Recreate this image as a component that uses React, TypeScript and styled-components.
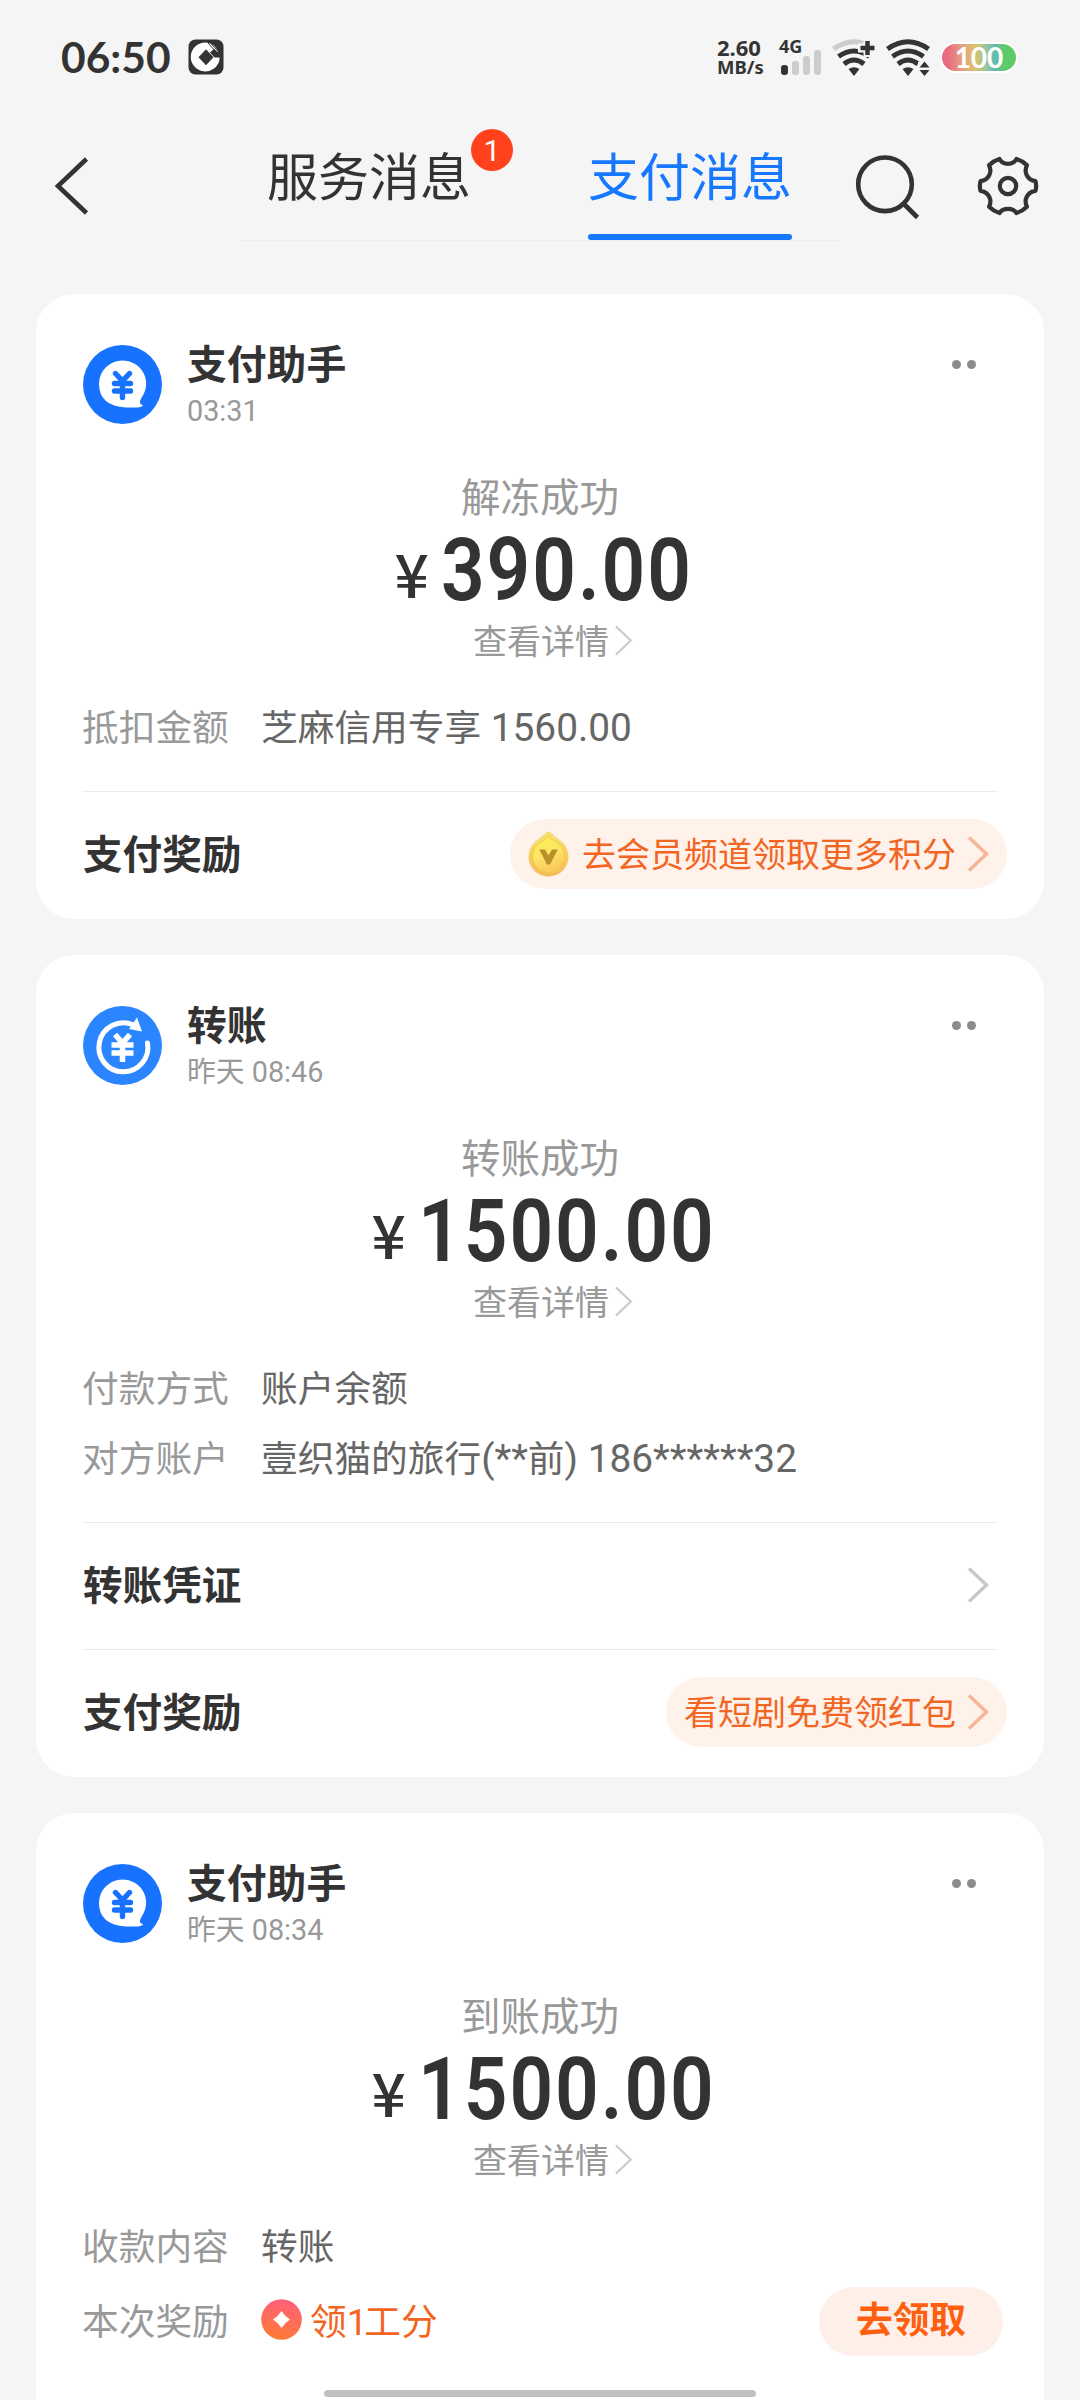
import React from 'react';
import styled, { createGlobalStyle } from 'styled-components';

const cjk = '"Noto Sans CJK SC", "Noto Sans", sans-serif';
const mixed = 'Roboto, "Noto Sans CJK SC", sans-serif';
const ink = '#333333';
const muted = '#999999';
const orange = '#f26522';

const GlobalStyle = createGlobalStyle`
  * { box-sizing: border-box; }
  body { margin: 0; background: #f5f5f5; }
  svg { display: block; flex: none; overflow: visible; }
`;

const Screen = styled.div`
  position: relative;
  width: 1080px;
  height: 2400px;
  overflow: hidden;
  background: #f5f5f5;
  color: ${ink};
  font-family: ${cjk};
`;

/* ---------- status bar ---------- */

const StatusBar = styled.div`
  display: flex;
  align-items: center;
  height: 114px;
  padding: 0 62px 0 61px;
`;

const Clock = styled.div`
  width: 127px;
  font: 700 42.5px/50px Lato, sans-serif;
`;

const StatusRight = styled.div`
  display: flex;
  align-items: center;
  gap: 10px;
  margin-left: auto;
`;

const NetSpeed = styled.div`
  width: 54px;
  font: 700 21px/20px "Noto Sans", sans-serif;
  white-space: nowrap;
`;

const SpeedValue = styled.div`
  font-size: 22px;
`;

const SpeedUnit = styled.div`
  font-size: 18.5px;
`;

const Cellular = styled.div`
  display: flex;
  flex-direction: column;
  width: 41px;
  height: 36px;
`;

const CellType = styled.div`
  height: 11px;
  margin-left: -2px;
  font: 700 18px/15px "Noto Sans", sans-serif;
`;

const Battery = styled.div`
  display: flex;
  align-items: center;
  justify-content: center;
  width: 78px;
  height: 31px;
  border: 2px solid #ffffff;
  border-radius: 16px;
  background: linear-gradient(90deg, #e96b80 8%, #e3a384 28%, #dcc26a 45%, #8fc6a3 62%, #63b9b5 70%, #5ecb6b 84%);
  color: #ffffff;
  font: 700 28px/27px Lato, sans-serif;
`;

/* ---------- navigation ---------- */

const NavBar = styled.div`
  display: flex;
  align-items: flex-start;
  height: 180px;
`;

const BackButton = styled.div`
  width: 240px;
  padding: 43px 0 0 53px;
`;

const Tabs = styled.div`
  display: flex;
  gap: 117px;
  width: 600px;
  height: 127px;
  padding-left: 27px;
  border-bottom: 1px solid #eeeeee;
`;

const Tab = styled.div<{ $active?: boolean }>`
  position: relative;
  width: 204px;
  height: 126px;
  padding-top: 30px;
  color: ${p => (p.$active ? '#1677ff' : ink)};
  font-size: 51px;
  line-height: 60px;
  white-space: nowrap;
  &::after {
    content: '';
    display: ${p => (p.$active ? 'block' : 'none')};
    height: 6px;
    margin-top: 30px;
    border-radius: 3px;
    background: #1677ff;
  }
`;

const Badge = styled.span`
  position: absolute;
  top: 15px;
  left: 204px;
  width: 42px;
  height: 42px;
  border-radius: 50%;
  background: #ff411c;
  color: #ffffff;
  font: 30px/43px Roboto, sans-serif;
  text-align: center;
`;

const NavActions = styled.div`
  display: flex;
  gap: 57px;
  padding: 42px 0 0 15px;
`;

/* ---------- cards ---------- */

const Feed = styled.div`
  display: flex;
  flex-direction: column;
  gap: 36px;
  padding: 0 36px;
`;

const Card = styled.section`
  padding: 45px 46px 1px;
  border-radius: 38px;
  background: #ffffff;
  &:last-child {
    padding-bottom: 100px;
  }
`;

const CardHead = styled.header`
  display: flex;
  align-items: flex-start;
  height: 128px;
`;

const AvatarSlot = styled.div`
  margin: 6px 25px 0 1px;
`;

const Title = styled.div`
  font-size: 39.8px;
  font-weight: 700;
  line-height: 46px;
`;

const Time = styled.div`
  margin-top: 7px;
  color: ${muted};
  font: 28.8px/38px ${mixed};
`;

const More = styled.div`
  display: flex;
  gap: 6px;
  margin: 21px 22px 0 auto;
`;

const Dot = styled.i`
  width: 9px;
  height: 9px;
  border-radius: 50%;
  background: #8c8c8c;
`;

const Status = styled.div`
  color: ${muted};
  font-size: 39.5px;
  line-height: 56px;
  text-align: center;
`;

const Amount = styled.div`
  display: flex;
  align-items: baseline;
  justify-content: center;
  height: 84px;
  margin: 5px 0 3px;
  padding-left: 11px;
  font: 600 87px/84px Roboto, sans-serif;
  letter-spacing: 2.2px;
  transform: scaleX(0.88);
`;

const Yen = styled.span`
  position: relative;
  top: -2px;
  margin-right: 16px;
  font: 500 60px/60px ${cjk};
  letter-spacing: 0;
  transform: scaleX(1.14);
`;

const DetailLink = styled.div`
  display: flex;
  align-items: center;
  justify-content: center;
  gap: 6px;
  height: 48px;
  margin-bottom: 27px;
  padding: 2px 0 0 26px;
  color: ${muted};
  font-size: 34px;
  line-height: 46px;
`;

const Row = styled.div<{ $tall?: boolean }>`
  display: flex;
  align-items: center;
  height: ${p => (p.$tall ? 80 : 70)}px;
  font-size: 36.7px;
  line-height: 50px;
  white-space: nowrap;
`;

const RowLabel = styled.div`
  width: 179px;
  color: ${muted};
`;

const RowValue = styled.div`
  padding-top: 7px;
  color: #666666;
  font-family: ${mixed};
`;

const Latin = styled.span`
  font-size: 38.8px;
  line-height: 40px;
`;

const RewardValue = styled.div`
  display: flex;
  align-items: center;
  gap: 8px;
  color: ${orange};
`;

const RewardText = styled.span`
  padding-top: 7px;
  font-family: ${mixed};
`;

const Points = styled.span`
  letter-spacing: -3px;
`;

const ClaimButton = styled.div`
  width: 184px;
  height: 69px;
  margin: 4px -5px 0 auto;
  border-radius: 35px;
  background: #ffefe9;
  color: #ff6010;
  font-weight: 700;
  line-height: 60px;
  text-align: center;
`;

const Footers = styled.div`
  margin-top: 31px;
`;

const Footer = styled.div`
  display: flex;
  align-items: center;
  justify-content: space-between;
  height: 127px;
  padding-bottom: 2px;
  border-top: 1px solid #ebebeb;
`;

const FooterLabel = styled.div`
  padding: 0 0 4px 1px;
  font-size: 39.6px;
  font-weight: 700;
  line-height: 50px;
`;

const FooterArrow = styled.div`
  margin-right: 9px;
`;

const Pill = styled.div`
  display: flex;
  align-items: center;
  height: 70px;
  margin-right: -9px;
  padding: 0 18px;
  border-radius: 35px;
  background: #fff2eb;
  color: ${orange};
  font-size: 34px;
  line-height: 50px;
  white-space: nowrap;
`;

const PillText = styled.span`
  margin-right: 12px;
  padding-bottom: 3px;
`;

const CoinSlot = styled.span`
  margin-right: 13px;
`;

const HomeIndicator = styled.div`
  position: absolute;
  left: 324px;
  bottom: 3px;
  width: 432px;
  height: 7px;
  border-radius: 4px;
  background: #c0c0c0;
`;

/* ---------- drawings ---------- */

const BankIcon = () => (
  <svg width="36" height="36" viewBox="0 0 36 36">
    <rect x="0.5" y="0.5" width="35" height="35" rx="7" fill="#333" />
    <path d="M18 3.5a14.5 14.5 0 1 0 13.6 16.8L31.5 18.6H26.5L22 13.5L26 10L30.5 13.5A14.5 14.5 0 0 0 18 3.5Z" fill="#fff" />
    <path d="M20 4L29 14M23 4.5L31 13" stroke="#333" strokeWidth="1" />
    <path d="M18 10.3l7.5 8l-7.5 8l-7.5-8z" fill="#333" />
  </svg>
);

const SignalBars = () => (
  <svg width="41" height="25" viewBox="0 0 41 25">
    <rect x="0" y="15" width="7" height="10" rx="3" fill="#333" />
    <rect x="11" y="11" width="7" height="14" rx="3" fill="#ccc" />
    <rect x="22" y="6" width="7" height="19" rx="3" fill="#ccc" />
    <rect x="33" y="0" width="7" height="25" rx="3" fill="#ccc" />
  </svg>
);

const WifiIcon = ({ plus }: { plus?: boolean }) => (
  <svg width="44" height="37" viewBox="0 0 44 37">
    <g fill="none" stroke="#333" strokeWidth="5">
      <path d="M1.5 10Q22-4.500 42.500 10" stroke={plus ? '#ccc' : '#333'} />
      <path d="M6.500 17.500Q22 6.500 37.500 17.500" />
      <path d="M12 25Q22 17 32 25" />
    </g>
    <path d="M16.500 30Q22 26.500 27.500 30L22 37Z" fill="#333" />
    {plus ? (
      <>
        <path d="M36 0V18M26 9H46" stroke="#f5f5f5" strokeWidth="9" />
        <path d="M35.500 2V16M28.500 9H42.500" stroke="#333" strokeWidth="4.500" />
      </>
    ) : (
      <>
        <path d="M32 23H44V37H32Z" fill="#f5f5f5" />
        <path d="M33.500 28.500L38.500 22.500L43.500 28.500ZM33.500 31L38.500 37L43.500 31Z" fill="#333" />
      </>
    )}
  </svg>
);

const BackIcon = () => (
  <svg width="36" height="58" viewBox="0 0 36 58" fill="none" stroke="#333" strokeWidth="4.6">
    <path d="M33.500 2L5 29L33.500 56" />
  </svg>
);

const SearchIcon = () => (
  <svg width="66" height="64" viewBox="0 0 66 64" fill="none" stroke="#333" strokeWidth="4.6">
    <circle cx="30" cy="28.3" r="26.8" />
    <path d="M48 47L62.500 61.500" />
  </svg>
);

const GearIcon = () => (
  <svg width="60" height="60" viewBox="0 0 60 60" fill="none" stroke="#333" strokeWidth="4.2" strokeLinejoin="round">
    <path d="M21.500 3C25 9.500 35 9.500 38.500 3Q44.500 4.800 49 9.200C45.500 16 49 24 57.500 25.200Q58.800 30 57.500 34.800C49 36 45.500 44 49 50.800Q44.500 55.200 38.500 57C35 51.500 25 51.500 21.500 57Q15.500 55.200 11 50.800C14.500 44 11 36 2.500 34.800Q1.200 30 2.500 25.200C11 24 14.500 16 11 9.200Q15.500 4.800 21.500 3Z" />
    <circle cx="30" cy="30" r="8.2" />
  </svg>
);

const AssistantAvatar = () => (
  <svg width="79" height="79" viewBox="0 0 79 79">
    <circle cx="39.5" cy="39.5" r="39.5" fill="#1672ff" />
    <path d="M39.500 15.500a23.300 23.300 0 0 1 19.500 36.500q-2.500 4-2 6q.8 1.800 3 2.200q-1 2-6 2.300H43q-27-1.500-27-23.700a23.400 23.400 0 0 1 23.500-23.300Z" fill="#fff" />
    <path d="M32.500 28.500L39.500 36L46.500 28.500M39.500 36V52.500M31.500 38.500H47.500M31.500 46H47.500" fill="none" stroke="#1672ff" strokeWidth="5.4" strokeLinecap="round" strokeLinejoin="round" />
  </svg>
);

const TransferAvatar = () => (
  <svg width="79" height="79" viewBox="0 0 79 79">
    <circle cx="39.5" cy="39.5" r="39.5" fill="#2b85ff" />
    <path d="M50 18.800A24.500 24.500 0 1 0 64.500 37" fill="none" stroke="#fff" strokeWidth="5" strokeLinecap="round" />
    <path d="M54 11.500L59 25.500L46 23Z" fill="#fff" />
    <path d="M32 28.500L39.500 37L47 28.500M39.500 36V56M28.500 39H50.500M28.500 47H50.500" fill="none" stroke="#fff" strokeWidth="5.5" />
  </svg>
);

const CoinIcon = () => (
  <svg width="41" height="46" viewBox="0 0 42 47">
    <defs>
      <linearGradient id="coin" x1="0" y1="0" x2="0" y2="1">
        <stop offset="0" stopColor="#f3e27a" />
        <stop offset="0.5" stopColor="#f6d25c" />
        <stop offset="1" stopColor="#f5b95a" />
      </linearGradient>
      <linearGradient id="coinFace" x1="0" y1="0" x2="0.3" y2="1">
        <stop offset="0" stopColor="#fdf04e" />
        <stop offset="0.6" stopColor="#fde468" />
        <stop offset="1" stopColor="#fbcb5c" />
      </linearGradient>
    </defs>
    <path d="M21 0.500Q23 .5 25 3Q29 6.500 33 9.500A20.500 20.500 0 1 1 9 9.500Q13 6.500 17 3Q19 .5 21 .5Z" fill="url(#coin)" />
    <path d="M21 5Q24 8.500 30 12A16.500 16.500 0 1 1 12 12Q18 8.500 21 5Z" fill="url(#coinFace)" stroke="#f0c548" strokeWidth="1" />
    <path d="M11.500 19H17.500L21 25L24.500 19H30.500L23 33.500Q21 35.500 19 33.500Z" fill="#b9912a" />
  </svg>
);

const PointsIcon = () => (
  <svg width="41" height="41" viewBox="0 0 41 41">
    <defs>
      <linearGradient id="points" x1="0.6" y1="0" x2="0.4" y2="1">
        <stop offset="0" stopColor="#ff5f7c" />
        <stop offset="1" stopColor="#ff7a35" />
      </linearGradient>
    </defs>
    <circle cx="20.5" cy="20.5" r="20.3" fill="url(#points)" />
    <path d="M20.500 12Q24 17.500 29 20.500Q24 23.500 20.500 29Q17 23.500 12 20.500Q17 17.500 20.500 12Z" fill="#fff" />
  </svg>
);

const Chevron = ({ color, small }: { color: string; small?: boolean }) => (
  <svg width={small ? 18 : 21} height={small ? 31 : 36} viewBox="0 0 21 36" fill="none" stroke={color} strokeWidth={small ? 2.6 : 3.4}>
    <path d="M1 1.500L18.500 18L1 34.500" />
  </svg>
);

/* ---------- message card ---------- */

interface Message {
  title: string;
  time: string;
  transfer?: boolean;
  status: string;
  amount: string;
  children: React.ReactNode;
}

const MessageCard = ({ title, time, transfer, status, amount, children }: Message) => (
  <Card>
    <CardHead>
      <AvatarSlot>{transfer ? <TransferAvatar /> : <AssistantAvatar />}</AvatarSlot>
      <div>
        <Title>{title}</Title>
        <Time>{time}</Time>
      </div>
      <More>
        <Dot />
        <Dot />
      </More>
    </CardHead>
    <Status>{status}</Status>
    <Amount>
      <Yen>¥</Yen>
      {amount}
    </Amount>
    <DetailLink>
      <span>查看详情</span>
      <Chevron color="#cccccc" small />
    </DetailLink>
    {children}
  </Card>
);

/* Digits and symbols are set slightly larger than the Chinese text around them. */
const Detail = ({ label, value }: { label: string; value: string }) => (
  <Row>
    <RowLabel>{label}</RowLabel>
    <RowValue>
      {value.split(/([\x20-\x7e]+)/).map((part, i) => (i % 2 ? <Latin key={i}>{part}</Latin> : part))}
    </RowValue>
  </Row>
);

const RewardFooter = ({ text, coin }: { text: string; coin?: boolean }) => (
  <Footer>
    <FooterLabel>支付奖励</FooterLabel>
    <Pill>
      {coin && (
        <CoinSlot>
          <CoinIcon />
        </CoinSlot>
      )}
      <PillText>{text}</PillText>
      <Chevron color="#f8b596" />
    </Pill>
  </Footer>
);

export default function App() {
  return (
    <Screen>
      <GlobalStyle />
      <StatusBar>
        <Clock>06:50</Clock>
        <BankIcon />
        <StatusRight>
          <NetSpeed>
            <SpeedValue>2.60</SpeedValue>
            <SpeedUnit>MB/s</SpeedUnit>
          </NetSpeed>
          <Cellular>
            <CellType>4G</CellType>
            <SignalBars />
          </Cellular>
          <WifiIcon plus />
          <WifiIcon />
          <Battery>100</Battery>
        </StatusRight>
      </StatusBar>

      <NavBar>
        <BackButton>
          <BackIcon />
        </BackButton>
        <Tabs>
          <Tab>
            服务消息
            <Badge>1</Badge>
          </Tab>
          <Tab $active>支付消息</Tab>
        </Tabs>
        <NavActions>
          <SearchIcon />
          <GearIcon />
        </NavActions>
      </NavBar>

      <Feed>
        <MessageCard title="支付助手" time="03:31" status="解冻成功" amount="390.00">
          <Detail label="抵扣金额" value="芝麻信用专享 1560.00" />
          <Footers>
            <RewardFooter text="去会员频道领取更多积分" coin />
          </Footers>
        </MessageCard>

        <MessageCard title="转账" time="昨天 08:46" transfer status="转账成功" amount="1500.00">
          <Detail label="付款方式" value="账户余额" />
          <Detail label="对方账户" value="壹织猫的旅行(**前) 186******32" />
          <Footers>
            <Footer>
              <FooterLabel>转账凭证</FooterLabel>
              <FooterArrow>
                <Chevron color="#c8c8c8" />
              </FooterArrow>
            </Footer>
            <RewardFooter text="看短剧免费领红包" />
          </Footers>
        </MessageCard>

        <MessageCard title="支付助手" time="昨天 08:34" status="到账成功" amount="1500.00">
          <Detail label="收款内容" value="转账" />
          <Row $tall>
            <RowLabel>本次奖励</RowLabel>
            <RewardValue>
              <PointsIcon />
              <RewardText>
                领<Points>1</Points>工分
              </RewardText>
            </RewardValue>
            <ClaimButton>去领取</ClaimButton>
          </Row>
        </MessageCard>
      </Feed>
      <HomeIndicator />
    </Screen>
  );
}
